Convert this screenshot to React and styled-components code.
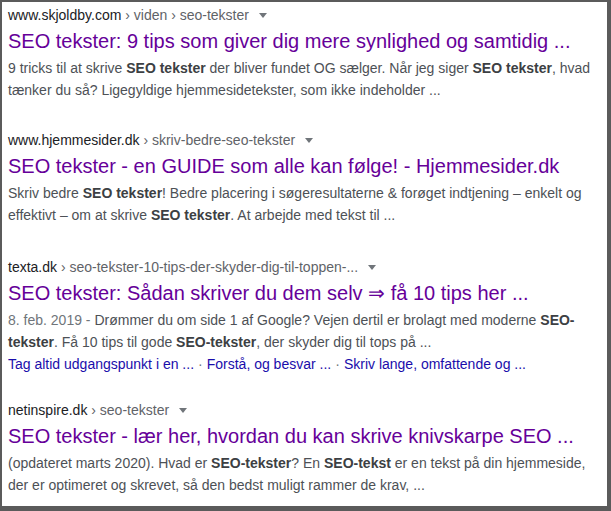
import React from 'react';
import styled, { createGlobalStyle } from 'styled-components';

const GlobalStyle = createGlobalStyle`
	html, body {
		margin: 0;
		padding: 0;
		background: #fff;
	}
	body {
		font-family: "Liberation Sans", Arial, sans-serif;
	}
`;

const Frame = styled.div`
	box-sizing: border-box;
	width: 611px;
	height: 511px;
	border-style: solid;
	border-color: #5b5b5b;
	border-width: 2px 4px 5px 2px;
	background: #fff;
	padding: 3px 0 0 6px;
	overflow: hidden;
`;

const Result = styled.div`
	margin-bottom: ${({ gap }) => gap}px;
`;

const Cite = styled.div`
	display: flex;
	align-items: center;
	height: 20px;
	font-size: 14px;
	line-height: 20px;
	color: #202124;
	white-space: nowrap;
`;

const Crumbs = styled.span`
	color: #5f6368;
`;

const Caret = styled.span`
	display: inline-block;
	margin-left: 10px;
	width: 0;
	height: 0;
	border-left: 4px solid transparent;
	border-right: 4px solid transparent;
	border-top: 5px solid #70757a;
`;

const Title = styled.a`
	display: block;
	margin-top: 3px;
	font-size: 20px;
	line-height: 26px;
	color: #660099;
	text-decoration: none;
	white-space: nowrap;
`;

const Snippet = styled.div`
	margin-top: 3px;
	font-size: 14px;
	line-height: 22px;
	color: #4d5156;
	b {
		color: #3c4043;
		font-weight: bold;
	}
`;

const Line = styled.span`
	display: block;
	white-space: nowrap;
`;

const DateText = styled.span`
	color: #70757a;
`;

const Sitelinks = styled.div`
	font-size: 14px;
	line-height: 22px;
	white-space: nowrap;
	color: #70757a;
	a {
		color: #1a0dab;
		text-decoration: none;
	}
`;

const Dot = styled.span`
	margin: 0 4px;
`;

export default function App() {
	return (
		<>
			<GlobalStyle />
			<Frame>
				<Result gap={29}>
					<Cite>
						www.skjoldby.com<Crumbs>&nbsp;› viden › seo-tekster</Crumbs>
						<Caret />
					</Cite>
					<Title href="#">SEO tekster: 9 tips som giver dig mere synlighed og samtidig ...</Title>
					<Snippet>
						<Line>
							9 tricks til at skrive <b>SEO tekster</b> der bliver fundet OG sælger. Når jeg siger <b>SEO tekster</b>, hvad
						</Line>
						<Line>tænker du så? Ligegyldige hjemmesidetekster, som ikke indeholder ...</Line>
					</Snippet>
				</Result>

				<Result gap={31}>
					<Cite>
						www.hjemmesider.dk<Crumbs>&nbsp;› skriv-bedre-seo-tekster</Crumbs>
						<Caret />
					</Cite>
					<Title href="#">SEO tekster - en GUIDE som alle kan følge! - Hjemmesider.dk</Title>
					<Snippet>
						<Line>
							Skriv bedre <b>SEO tekster</b>! Bedre placering i søgeresultaterne &amp; forøget indtjening – enkelt og
						</Line>
						<Line>
							effektivt – om at skrive <b>SEO tekster</b>. At arbejde med tekst til ...
						</Line>
					</Snippet>
				</Result>

				<Result gap={25}>
					<Cite>
						texta.dk<Crumbs>&nbsp;› seo-tekster-10-tips-der-skyder-dig-til-toppen-...</Crumbs>
						<Caret />
					</Cite>
					<Title href="#">SEO tekster: Sådan skriver du dem selv ⇒ få 10 tips her ...</Title>
					<Snippet>
						<Line>
							<DateText>8. feb. 2019 - </DateText>Drømmer du om side 1 af Google? Vejen dertil er brolagt med moderne <b>SEO-</b>
						</Line>
						<Line>
							<b>tekster</b>. Få 10 tips til gode <b>SEO-tekster</b>, der skyder dig til tops på ...
						</Line>
					</Snippet>
					<Sitelinks>
						<a href="#">Tag altid udgangspunkt i en ...</a>
						<Dot>·</Dot>
						<a href="#">Forstå, og besvar ...</a>
						<Dot>·</Dot>
						<a href="#">Skriv lange, omfattende og ...</a>
					</Sitelinks>
				</Result>

				<Result gap={0}>
					<Cite>
						netinspire.dk<Crumbs>&nbsp;› seo-tekster</Crumbs>
						<Caret />
					</Cite>
					<Title href="#">SEO tekster - lær her, hvordan du kan skrive knivskarpe SEO ...</Title>
					<Snippet>
						<Line>
							(opdateret marts 2020). Hvad er <b>SEO-tekster</b>? En <b>SEO-tekst</b> er en tekst på din hjemmeside,
						</Line>
						<Line>der er optimeret og skrevet, så den bedst muligt rammer de krav, ...</Line>
					</Snippet>
				</Result>
			</Frame>
		</>
	);
}
